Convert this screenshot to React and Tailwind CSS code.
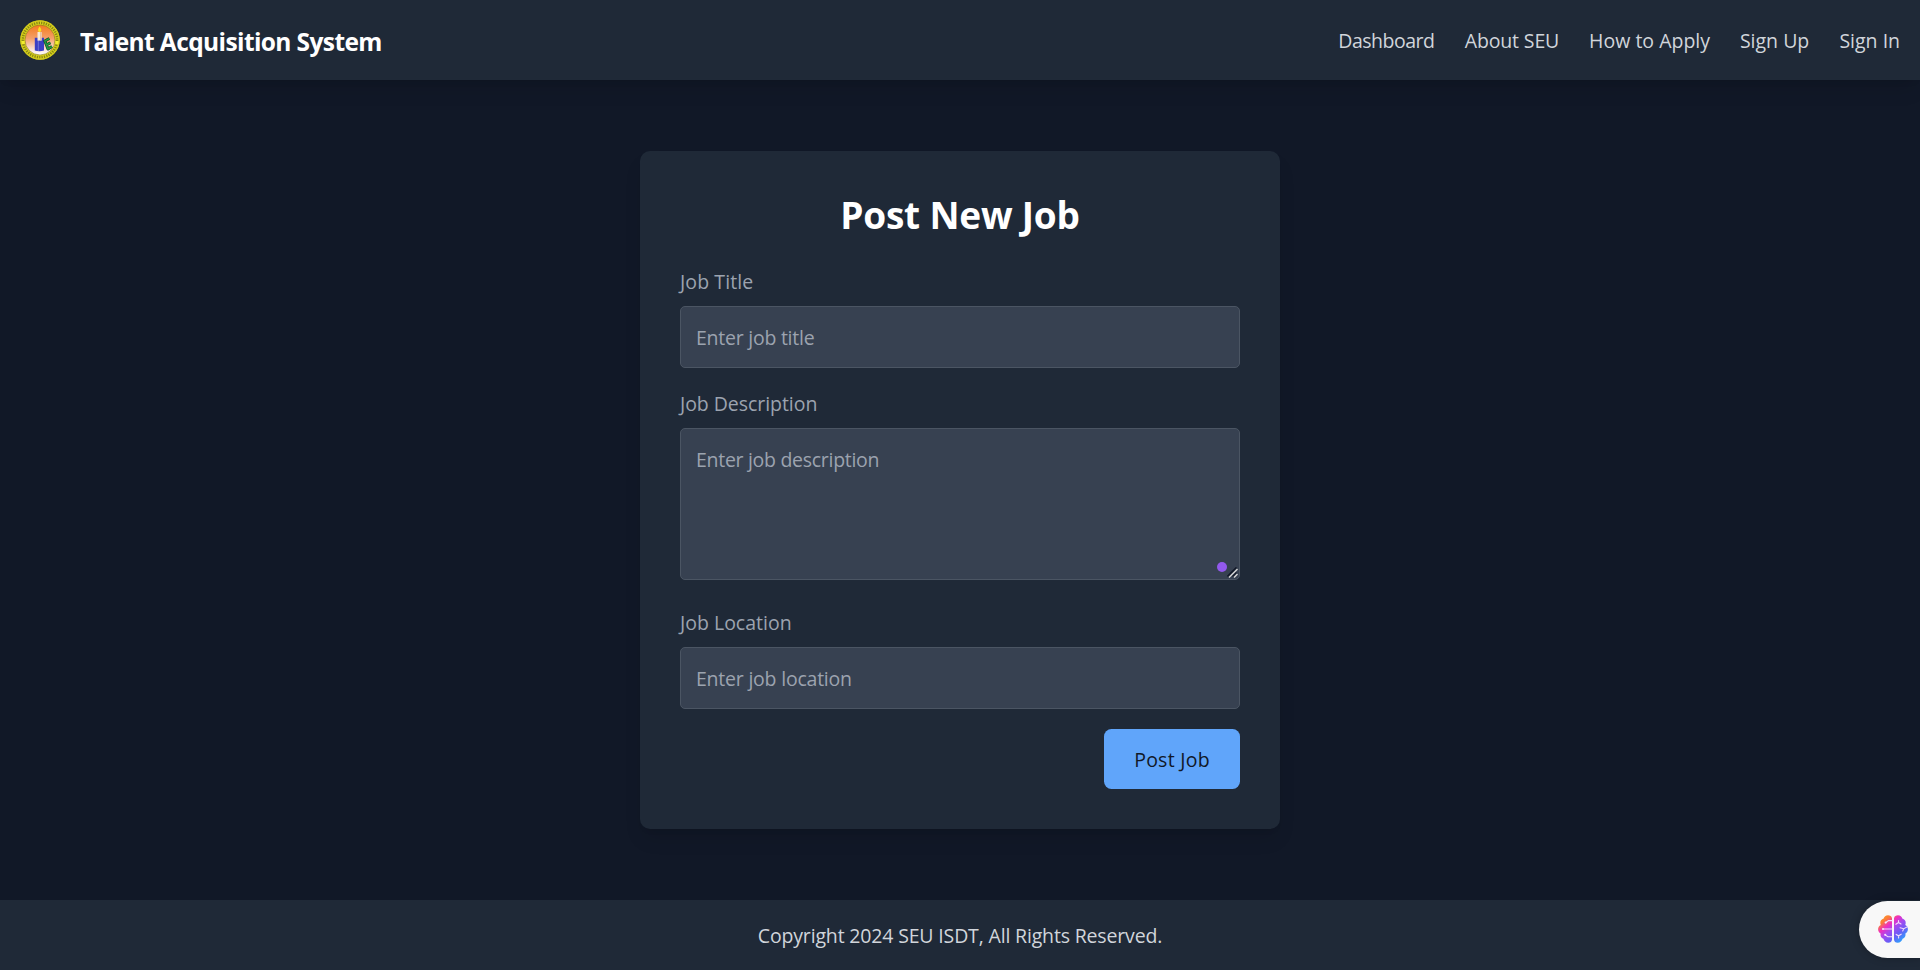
import React from "react";

const font = "font-['Open_Sans','Noto_Sans',sans-serif]";

function Logo() {
  return (
    <svg viewBox="0 0 40 40" className="size-10" aria-hidden="true">
      <defs>
        <linearGradient id="sunset" x1="0" y1="0" x2="0" y2="1">
          <stop offset="0" stopColor="#f47a1c" />
          <stop offset="0.45" stopColor="#f3a06a" />
          <stop offset="0.85" stopColor="#fbe9e2" />
          <stop offset="1" stopColor="#ffffff" />
        </linearGradient>
      </defs>
      <circle cx="20" cy="20" r="19.8" fill="#d8d21c" />
      <circle cx="20" cy="20" r="17.2" fill="none" stroke="#6f6d12" strokeWidth="2.6" strokeDasharray="1.3 1.1" opacity="0.75" />
      <circle cx="20" cy="20" r="19.2" fill="none" stroke="#cfc81a" strokeWidth="1" />
      <circle cx="20" cy="20" r="15" fill="url(#sunset)" stroke="#8a7a1c" strokeWidth="0.6" />
      <path d="M1.6 22.5h3M35.4 22.5h3" stroke="#f2ee30" strokeWidth="3" />
      <path d="M14.8 17.8h9.200v12.700q-4.600 1.400-9.200 0z" fill="#3a3fc4" />
      <path d="M18.300 20v11" stroke="#8587e0" strokeWidth="0.7" />
      <rect x="17.500" y="12" width="4.200" height="8.600" fill="#f7ead8" />
      <path d="M20.800 12v8.600" stroke="#e0b08c" strokeWidth="1" />
      <path d="M19.600 6.600c1.900 2.400 2.300 5 0 5.600c-2.300-.6-1.900-3.200 0-5.600z" fill="#f9e21f" />
      <g fill="none" strokeLinejoin="round">
        <path d="M29.300 18.500L24.800 21L26.500 25L30.400 22.800M26.500 25L28 29L32 26.500" stroke="#123a22" strokeWidth="3" />
        <path d="M29.300 18.500L24.800 21L26.500 25L30.400 22.800M26.500 25L28 29L32 26.500" stroke="#1f9c42" strokeWidth="1.700" />
      </g>
    </svg>
  );
}

function BrainIcon() {
  return (
    <svg viewBox="0 0 30 28" className="h-7 w-[30px]" aria-hidden="true">
      <defs>
        <linearGradient id="brain" x1="0.1" y1="0.05" x2="0.9" y2="0.95">
          <stop offset="0" stopColor="#ff9a1f" />
          <stop offset="0.16" stopColor="#fb7a3a" />
          <stop offset="0.32" stopColor="#ee2fc0" />
          <stop offset="0.5" stopColor="#a44af0" />
          <stop offset="0.7" stopColor="#6a5cf5" />
          <stop offset="1" stopColor="#1fb4ff" />
        </linearGradient>
      </defs>
      <path
        fill="url(#brain)"
        d="M14 3.2C13.6 1.2 12 .3 10 .3C7.700 .3 6.100 1.600 5.700 3.500C3.500 4.100 2.100 5.800 2.300 8.100C2.300 8.900 2.500 9.500 2.800 10C1 11 .1 12.500 .1 14.200C.1 16 1 17.500 2.600 18.400C2 20.700 3.200 23 5.400 23.800C6 26.200 7.900 27.700 10.300 27.700C12.500 27.700 13.900 26.400 14 24.400ZM16 3.200C16.400 1.200 18 .3 20 .3C22.300 .3 23.900 1.600 24.300 3.500C26.500 4.100 27.900 5.800 27.700 8.100C27.700 8.900 27.500 9.500 27.200 10C29 11 29.900 12.500 29.900 14.200C29.900 16 29 17.500 27.400 18.400C28 20.700 26.800 23 24.600 23.800C24 26.200 22.100 27.700 19.700 27.700C17.500 27.700 16.100 26.400 16 24.400Z"
      />
      <g stroke="#f4d9fb" strokeWidth="1.1" fill="none" strokeLinecap="round">
        <path d="M14 5.600H10.500L8.300 7.300M14 14H5.500M14 21.700H9.800L7.600 20.100" />
        <path d="M20.500 5.600V7.500M17.900 9.300L20.500 7.500L23 9M30 11.500L25.800 13.700L22 12.800M25.800 13.700L24.700 15.900M18.200 19.400L20.600 20.800L23.200 19.200M20.600 20.800V23" />
      </g>
      <g fill="#f8e4fb">
        <circle cx="7.700" cy="7.600" r="1.100" />
        <circle cx="5" cy="14" r="1.100" />
        <circle cx="7.200" cy="19.800" r="1.100" />
      </g>
    </svg>
  );
}

const links = [
  { label: "Dashboard", style: "w-[96.4px] tracking-[-0.5px]" },
  { label: "About SEU", style: "w-[94.4px] tracking-[-0.14px]" },
  { label: "How to Apply", style: "w-[120.8px]" },
  { label: "Sign Up", style: "w-[69.5px]" },
  { label: "Sign In", style: "w-[60.6px]" },
];

const labelStyle = "mb-2.5 block h-[30px] leading-8 text-[#9ca3af]";
const fieldStyle =
  "block w-full rounded-[5px] border border-[#4b5563] bg-[#374151] px-[15px] leading-[30px] text-[#d1d5db] placeholder:text-[#9ca3af]";

export default function App() {
  return (
    <div className={`${font} flex h-[970px] flex-col overflow-hidden bg-[#111827] text-[19.5px] leading-[30px] text-[#d1d5db]`}>
      <header className="flex h-20 shrink-0 items-center justify-between bg-[#1f2937] px-5 shadow-[0_12.5px_18.75px_-3.75px_rgba(0,0,0,0.1),0_5px_7.5px_-5px_rgba(0,0,0,0.1)]">
        <div className="flex items-center gap-5">
          <Logo />
          <span className="pt-0.5 text-[24.5px] leading-[35px] font-bold tracking-[-0.6px] text-white">Talent Acquisition System</span>
        </div>
        <nav className="flex gap-[30px] pt-0.5">
          {links.map(({ label, style }) => (
            <a key={label} href="#" className={`${style} whitespace-nowrap`}>
              {label}
            </a>
          ))}
        </nav>
      </header>

      <main className="flex flex-1 items-center justify-center">
        <form className="w-[640px] rounded-[10px] bg-[#1f2937] p-10 shadow-[0_12.5px_18.75px_-3.75px_rgba(0,0,0,0.1),0_5px_7.5px_-5px_rgba(0,0,0,0.1)]">
          <h1 className="mb-[30px] h-[45px] text-center text-[37px] leading-[47px] font-bold tracking-[-0.2px] text-white">Post New Job</h1>

          <div className="mb-5">
            <label htmlFor="title" className={`${labelStyle} tracking-[0.1px]`}>Job Title</label>
            <input id="title" type="text" placeholder="Enter job title" className={`${fieldStyle} h-[62px] py-[15px] tracking-[-0.25px]`} />
          </div>

          <div className="mb-[27px]">
            <label htmlFor="description" className={`${labelStyle} tracking-[-0.05px]`}>Job Description</label>
            <div className="relative">
              <textarea id="description" placeholder="Enter job description" className={`${fieldStyle} h-[152px] resize-none pt-4 pb-3.5 tracking-[-0.29px]`} />
              <span className="absolute right-[13px] bottom-2 size-2.5 rounded-full bg-[#9259ed]" />
              <svg viewBox="0 0 11 11" className="absolute right-0.5 bottom-0.5 size-[11px]" aria-hidden="true">
                <path d="M0.500 9.500L9.500 .5M5.500 9.500L9.500 5.500" stroke="#111827" strokeWidth="1.700" />
                <path d="M2 10.500L10.500 2M7 10.500L10.500 7" stroke="#d5d5d5" strokeWidth="1.500" />
              </svg>
            </div>
          </div>

          <div className="mb-5">
            <label htmlFor="location" className={labelStyle}>Job Location</label>
            <input id="location" type="text" placeholder="Enter job location" className={`${fieldStyle} h-[62px] py-[15px] tracking-[-0.22px]`} />
          </div>

          <div className="flex justify-end">
            <button type="button" className="h-[60px] w-[136px] rounded-[7.5px] bg-[#60a5fa] pt-0.5 font-medium tracking-[0.25px] text-[#111827]">
              Post Job
            </button>
          </div>
        </form>
      </main>

      <footer className="h-[70px] shrink-0 bg-[#1f2937] pt-[21px] text-center tracking-[-0.165px]">
        Copyright 2024 SEU ISDT, All Rights Reserved.
      </footer>

      <div className="fixed right-0 bottom-3 flex h-[57px] w-[61px] items-center rounded-l-full bg-[#f8f8f8] pb-px pl-[19px] shadow-[0_0_8px_rgba(0,0,0,0.25)]">
        <BrainIcon />
      </div>
    </div>
  );
}
